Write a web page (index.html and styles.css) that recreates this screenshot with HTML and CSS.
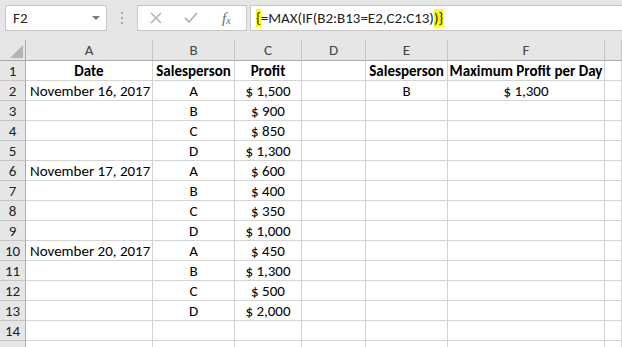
FILE: index.html
```html
<!DOCTYPE html>
<html>
<head>
<meta charset="utf-8">
<link rel="stylesheet" href="styles.css">
</head>
<body>
<div class="app">
  <div class="toolbar">
    <div class="namebox">
      <span class="name">F2</span>
      <svg class="dd" width="8" height="5" viewBox="0 0 8 5"><path d="M0 0H8L4 4Z" fill="#7a7a7a"/></svg>
    </div>
    <div class="grip">
      <svg width="3" height="12" viewBox="0 0 3 12"><rect x="0" y="0" width="2" height="2" fill="#a6a6a6"/><rect x="0" y="5" width="2" height="2" fill="#a6a6a6"/><rect x="0" y="10" width="2" height="2" fill="#a6a6a6"/></svg>
    </div>
    <div class="fxbox">
      <svg class="ic" width="12" height="12" viewBox="0 0 12 12"><path d="M1 1L11 11M11 1L1 11" stroke="#b3b3b3" stroke-width="1.6"/></svg>
      <svg class="ic" width="14" height="12" viewBox="0 0 14 12"><path d="M1 6L5 10L13 1" stroke="#b3b3b3" stroke-width="1.8" fill="none"/></svg>
      <span class="fx">f<sub>x</sub></span>
    </div>
    <div class="formula"><span class="hl">{</span>=MAX(IF(B2:B13=E2,C2:C13)<span class="hl">)}</span></div>
  </div>
  <div class="sheet">
    <div class="corner"><span class="tri"></span></div>
    <div class="ch">A</div><div class="ch">B</div><div class="ch">C</div><div class="ch">D</div><div class="ch">E</div><div class="ch">F</div><div class="ch"></div>

    <div class="rh">1</div><div class="c b ctr">Date</div><div class="c b ctr">Salesperson</div><div class="c b ctr">Profit</div><div class="c"></div><div class="c b ctr">Salesperson</div><div class="c b ctr">Maximum Profit per Day</div><div class="c"></div>
    <div class="rh">2</div><div class="c">November 16, 2017</div><div class="c ctr">A</div><div class="c ctr">$ 1,500</div><div class="c"></div><div class="c ctr">B</div><div class="c ctr">$ 1,300</div><div class="c"></div>
    <div class="rh">3</div><div class="c"></div><div class="c ctr">B</div><div class="c ctr">$ 900</div><div class="c"></div><div class="c"></div><div class="c"></div><div class="c"></div>
    <div class="rh">4</div><div class="c"></div><div class="c ctr">C</div><div class="c ctr">$ 850</div><div class="c"></div><div class="c"></div><div class="c"></div><div class="c"></div>
    <div class="rh">5</div><div class="c"></div><div class="c ctr">D</div><div class="c ctr">$ 1,300</div><div class="c"></div><div class="c"></div><div class="c"></div><div class="c"></div>
    <div class="rh">6</div><div class="c">November 17, 2017</div><div class="c ctr">A</div><div class="c ctr">$ 600</div><div class="c"></div><div class="c"></div><div class="c"></div><div class="c"></div>
    <div class="rh">7</div><div class="c"></div><div class="c ctr">B</div><div class="c ctr">$ 400</div><div class="c"></div><div class="c"></div><div class="c"></div><div class="c"></div>
    <div class="rh">8</div><div class="c"></div><div class="c ctr">C</div><div class="c ctr">$ 350</div><div class="c"></div><div class="c"></div><div class="c"></div><div class="c"></div>
    <div class="rh">9</div><div class="c"></div><div class="c ctr">D</div><div class="c ctr">$ 1,000</div><div class="c"></div><div class="c"></div><div class="c"></div><div class="c"></div>
    <div class="rh">10</div><div class="c">November 20, 2017</div><div class="c ctr">A</div><div class="c ctr">$ 450</div><div class="c"></div><div class="c"></div><div class="c"></div><div class="c"></div>
    <div class="rh">11</div><div class="c"></div><div class="c ctr">B</div><div class="c ctr">$ 1,300</div><div class="c"></div><div class="c"></div><div class="c"></div><div class="c"></div>
    <div class="rh">12</div><div class="c"></div><div class="c ctr">C</div><div class="c ctr">$ 500</div><div class="c"></div><div class="c"></div><div class="c"></div><div class="c"></div>
    <div class="rh">13</div><div class="c"></div><div class="c ctr">D</div><div class="c ctr">$ 2,000</div><div class="c"></div><div class="c"></div><div class="c"></div><div class="c"></div>
    <div class="rh">14</div><div class="c"></div><div class="c"></div><div class="c"></div><div class="c"></div><div class="c"></div><div class="c"></div><div class="c"></div>
    <div class="rh"></div><div class="c"></div><div class="c"></div><div class="c"></div><div class="c"></div><div class="c"></div><div class="c"></div><div class="c"></div>
  </div>
</div>
</body>
</html>
```
FILE: styles.css
```css
* { box-sizing: border-box; }
html, body { margin: 0; padding: 0; overflow: hidden; background: #e6e6e6; }
body { width: 622px; height: 347px; font-family: Carlito, Lato, "Liberation Sans", sans-serif; }
.app { width: 622px; height: 347px; overflow: hidden; }
.toolbar { height: 40px; display: flex; align-items: flex-start; padding-top: 5px; background: #e6e6e6; }
.namebox { margin-left: 5px; width: 102px; height: 26px; background: #fff; border: 1px solid #c6c6c6; display: flex; align-items: center; justify-content: space-between; padding: 0 6px 0 7px; }
.name { font-size: 15px; color: #222; }
.dd { margin-top: 1px; }
.grip { width: 30px; height: 26px; display: flex; align-items: center; justify-content: center; }
.fxbox { width: 110px; height: 26px; background: #fff; border: 1px solid #c6c6c6; display: flex; align-items: center; padding-left: 12px; gap: 22px; }
.fx { font-family: "Liberation Serif", serif; font-style: italic; font-size: 15px; color: #6a6a6a; margin-left: 2px; }
.fx sub { font-size: 10px; vertical-align: -1px; }
.formula { flex: 1; margin-left: 3px; height: 26px; background: #fff; border: 1px solid #c6c6c6; border-right: none; font-size: 15px; color: #222; padding-left: 5px; line-height: 24px; white-space: nowrap; }
.hl { background: #ffff00; }
.sheet { display: grid; grid-template-columns: 26px 127px 82px 67px 64px 82px 157px 1fr; grid-template-rows: 21px repeat(15, 20px); background: #fff; }
.corner { background: #e6e6e6; border-right: 1px solid #ababab; border-bottom: 1px solid #ababab; position: relative; }
.tri { position: absolute; right: 2px; bottom: 2px; width: 0; height: 0; border-left: 13px solid transparent; border-bottom: 13px solid #b4b4b4; }
.ch { background: #e6e6e6; border-right: 1px solid #c6c6c6; border-bottom: 1px solid #ababab; text-align: center; font-size: 15px; color: #444; line-height: 20px; }
.rh { background: #e6e6e6; border-right: 1px solid #ababab; border-bottom: 1px solid #c6c6c6; text-align: center; font-size: 15px; color: #222; line-height: 20px; }
.c { border-right: 1px solid #d4d4d4; border-bottom: 1px solid #d4d4d4; font-size: 15px; color: #000; line-height: 20px; padding-left: 4px; white-space: nowrap; }
.ctr { text-align: center; padding-left: 0; }
.b { font-weight: bold; }
```
